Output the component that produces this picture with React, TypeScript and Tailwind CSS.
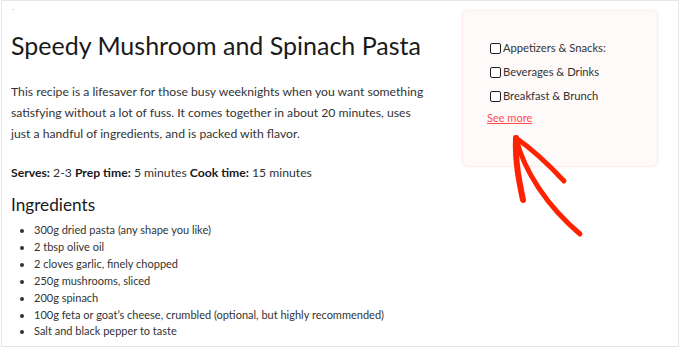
import React from "react";

const ingredients = [
  "300g dried pasta (any shape you like)",
  "2 tbsp olive oil",
  "2 cloves garlic, finely chopped",
  "250g mushrooms, sliced",
  "200g spinach",
  "100g feta or goat’s cheese, crumbled (optional, but highly recommended)",
  "Salt and black pepper to taste",
];

const cats = ["Appetizers & Snacks:", "Beverages & Drinks", "Breakfast & Brunch"];

export default function App() {
  return (
    <div className="w-[680px] h-[348px] bg-white" style={{ fontFamily: "Lato, 'Open Sans', sans-serif" }}>
      <div className="relative ml-[1px] w-[678px] h-[347px] border border-[#e6e6e6] flex overflow-hidden">
        <div className="flex-1 pl-[9px] pt-[2px] text-[#333]">
          <div className="text-[6px] leading-[12px] text-[#999] pl-[1px]">-</div>
          <h1 className="mt-[14px] text-[25px] leading-[32px] text-[#1a1a1a]">Speedy Mushroom and Spinach Pasta</h1>
          <p className="mt-[20px] text-[12.2px] leading-[21px] w-[419px]">
            This recipe is a lifesaver for those busy weeknights when you want something satisfying without a lot of fuss. It comes together in about 20 minutes, uses just a handful of ingredients, and is packed with flavor.
          </p>
          <p className="mt-[18px] text-[12.2px] leading-[21px]">
            <b className="font-bold text-[#1a1a1a]">Serves:</b> 2-3 <b className="font-bold text-[#1a1a1a]">Prep time:</b> 5 minutes <b className="font-bold text-[#1a1a1a]">Cook time:</b> 15 minutes
          </p>
          <h2 className="mt-[10px] text-[17.2px] leading-[24px] text-[#1a1a1a]">Ingredients</h2>
          <ul className="mt-[5px] pl-[23px] list-disc text-[11px] leading-[16.9px]">
            {ingredients.map((t) => (
              <li key={t}>{t}</li>
            ))}
          </ul>
        </div>
        <div className="w-[216px] pt-[9px]">
          <div className="w-[196px] h-[157px] rounded-[6px] bg-[#fffafa] border border-[#fdeeee] shadow-[0_0_3px_rgba(255,200,200,0.25)] pl-[27px] pt-[25px]">
            {cats.map((c) => (
              <label key={c} className="flex items-center gap-[2px] h-[24px] text-[11.2px] text-[#333]">
                <span className="w-[11px] h-[11px] border-[1.5px] border-[#222] rounded-[2px] bg-white" />
                <span>{c}</span>
              </label>
            ))}
            <a className="block -ml-[3px] mt-[2px] text-[11px] leading-[16px] text-[#ff4d4d] underline">See more</a>
          </div>
        </div>
        <svg className="absolute left-0 top-0" width="680" height="348" viewBox="0 0 680 348">
          <g fill="none" stroke="#ff2200" strokeLinecap="round" strokeLinejoin="round">
            <path d="M514 137 C 522 170, 545 205, 578 233" strokeWidth="5" />
            <path d="M514 137 C 513 160, 517 180, 521 199" strokeWidth="6" />
            <path d="M514 137 C 530 148, 548 165, 562 180" strokeWidth="5" />
          </g>
        </svg>
      </div>
    </div>
  );
}
